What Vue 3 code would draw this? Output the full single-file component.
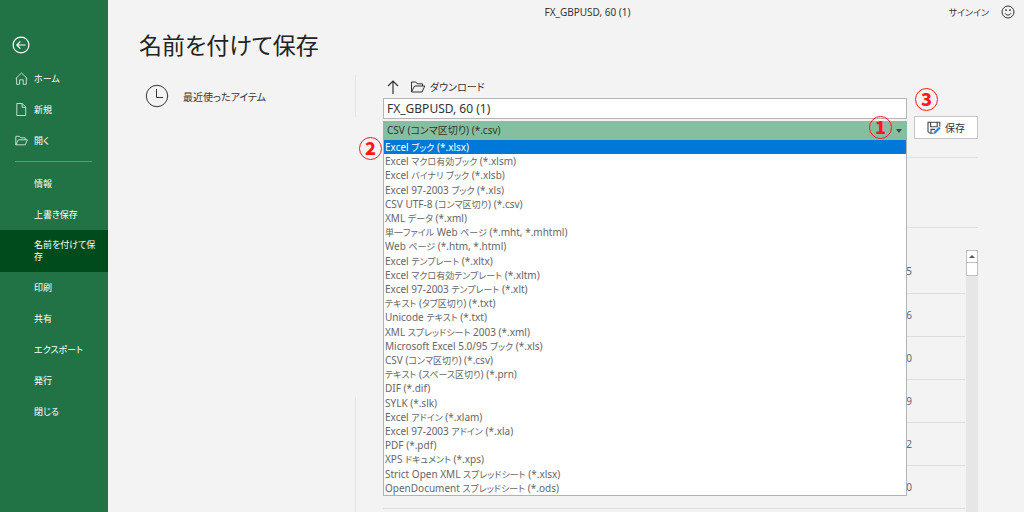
<script setup>
import { ref } from 'vue'

const primaryItems = [
  { label: 'ホーム', icon: 'home' },
  { label: '新規', icon: 'file' },
  { label: '開く', icon: 'folder' },
]
const secondaryItems = ['情報', '上書き保存', '名前を付けて保存', '印刷', '共有', 'エクスポート', '発行', '閉じる']
const activeItem = ref('名前を付けて保存')
const fileName = ref('FX_GBPUSD, 60 (1)')
const currentType = ref('CSV (コンマ区切り) (*.csv)')
const highlighted = ref(0)
const fileTypes = [
  'Excel ブック (*.xlsx)',
  'Excel マクロ有効ブック (*.xlsm)',
  'Excel バイナリ ブック (*.xlsb)',
  'Excel 97-2003 ブック (*.xls)',
  'CSV UTF-8 (コンマ区切り) (*.csv)',
  'XML データ (*.xml)',
  '単一ファイル Web ページ (*.mht, *.mhtml)',
  'Web ページ (*.htm, *.html)',
  'Excel テンプレート (*.xltx)',
  'Excel マクロ有効テンプレート (*.xltm)',
  'Excel 97-2003 テンプレート (*.xlt)',
  'テキスト (タブ区切り) (*.txt)',
  'Unicode テキスト (*.txt)',
  'XML スプレッドシート 2003 (*.xml)',
  'Microsoft Excel 5.0/95 ブック (*.xls)',
  'CSV (コンマ区切り) (*.csv)',
  'テキスト (スペース区切り) (*.prn)',
  'DIF (*.dif)',
  'SYLK (*.slk)',
  'Excel アドイン (*.xlam)',
  'Excel 97-2003 アドイン (*.xla)',
  'PDF (*.pdf)',
  'XPS ドキュメント (*.xps)',
  'Strict Open XML スプレッドシート (*.xlsx)',
  'OpenDocument スプレッドシート (*.ods)',
]
const rows = ['5', '6', '0', '9', '2', '0']

// Splits a label into Latin and Japanese runs so that each gets its own size.
const runs = (text) =>
  text.split(/([\u3000-\u9fff]+)/).filter(Boolean).map((t) => ({ text: t, ja: /[\u3000-\u9fff]/.test(t) }))
</script>

<template>
  <div class="backstage">
    <nav class="sidebar">
      <button class="back" aria-label="戻る">
        <svg width="18" height="18" viewBox="0 0 18 18" fill="none" stroke="currentColor" stroke-width="1.2">
          <circle cx="9" cy="9" r="7.9" />
          <path d="M13.6 9H5M8.4 5.4 4.8 9l3.6 3.6" />
        </svg>
      </button>
      <ul class="menu">
        <li v-for="item in primaryItems" :key="item.label">
          <button class="item with-icon">
            <svg v-if="item.icon === 'home'" width="13" height="13" viewBox="0 0 13 13" fill="none" stroke="currentColor">
              <path d="M.7 6.6 6.5 1l5.8 5.6M1.6 5.8v6.5h3V7.8h3.6v4.5h3.1V5.8" />
            </svg>
            <svg v-else-if="item.icon === 'file'" width="13" height="13" viewBox="0 0 13 13" fill="none" stroke="currentColor">
              <path d="M1.8.5h5.5l3.4 3.6v8.4H1.8zM7.1.7v3.6h3.5" />
            </svg>
            <svg v-else width="13" height="13" viewBox="0 0 13 13" fill="none" stroke="currentColor">
              <path d="M.8 10.8V2.3h3.7l1.2 1.5h4.5v1.9M.8 10.8l2.5-5h9.1l-2.2 5z" />
            </svg>
            <span>{{ item.label }}</span>
          </button>
        </li>
      </ul>
      <hr class="divider" />
      <ul class="menu">
        <li v-for="label in secondaryItems" :key="label">
          <button class="item" :class="{ active: label === activeItem }" @click="activeItem = label">{{ label }}</button>
        </li>
      </ul>
    </nav>

    <main class="main">
      <header class="topbar">
        <span class="doc-title">FX_GBPUSD, 60 (1)</span>
        <div class="account">
          <a class="signin" href="#">サインイン</a>
          <button class="smile" aria-label="フィードバック">
            <svg width="14" height="14" viewBox="0 0 14 14" fill="none" stroke="currentColor">
              <circle cx="7" cy="7" r="6" />
              <path d="M4 8.3c1 2.3 5 2.3 6 0" />
              <path d="M5 4.2v1.9M9 4.2v1.9" stroke-width="1.4" />
            </svg>
          </button>
        </div>
      </header>
      <h1>名前を付けて保存</h1>

      <div class="columns">
        <section class="places">
          <button class="recent">
            <svg width="24" height="24" viewBox="0 0 24 24" fill="none" stroke="currentColor">
              <circle cx="12" cy="12" r="10.7" />
              <path d="M11.5 5v8.5H18" />
            </svg>
            <span>最近使ったアイテム</span>
          </button>
          <div class="rule-gap"></div>
        </section>

        <section class="save-pane">
          <div class="path">
            <button class="up" aria-label="上へ">
              <svg width="14" height="16" viewBox="0 0 14 16" fill="none" stroke="currentColor" stroke-width="1.2">
                <path d="M7 15V2M2 7l5-5 5 5" />
              </svg>
            </button>
            <svg width="16" height="14" viewBox="0 0 16 14" fill="none" stroke="currentColor">
              <path d="M1.5 12V2h4.2l1.5 1.8h5.3V6M1.5 12l3-6h10.3L12 12z" />
            </svg>
            <a href="#">ダウンロード</a>
          </div>

          <div class="form">
            <div class="fields">
              <input v-model="fileName" class="name" type="text" aria-label="ファイル名" />
              <div class="combo">
                <select v-model="currentType" class="type" aria-label="ファイルの種類">
                  <option>CSV (コンマ区切り) (*.csv)</option>
                </select>
                <span class="caret"></span>
                <span class="badge badge-one">1</span>
                <ul class="options" role="listbox" aria-label="ファイルの種類の一覧">
                  <li
                    v-for="(type, i) in fileTypes"
                    :key="i"
                    role="option"
                    :aria-selected="i === highlighted"
                    :class="{ selected: i === highlighted }"
                    @mouseenter="highlighted = i"
                  ><div><span v-for="(run, n) in runs(type)" :key="n" :class="{ ja: run.ja }">{{ run.text }}</span></div></li>
                </ul>
                <span class="badge badge-two">2</span>
              </div>
            </div>
            <button class="save">
              <svg width="14" height="14" viewBox="0 0 14 14" fill="none" stroke="#444" stroke-width="1.1">
                <path d="M6 12.3H3L1 10.6V1.2h11.8v4.3M3.6 1.2v4.6h6.6V1.2M4 12.3V8.4h4" />
                <path d="m6 13.6.9-3 5.2-5.2 1.8 1.8-5.2 5.2z" fill="#2b88d8" stroke="#f3f3f3" stroke-width=".4" />
              </svg>
              <span>保存</span>
              <span class="badge badge-three">3</span>
            </button>
          </div>

          <div class="tools"></div>
          <div class="files">
            <table>
              <tbody>
                <tr v-for="(r, i) in rows" :key="i"><td>{{ r }}</td></tr>
              </tbody>
            </table>
            <div class="scrollbar">
              <button class="scroll-up" aria-label="上にスクロール"><span></span></button>
              <div class="thumb"></div>
            </div>
          </div>
        </section>
      </div>
    </main>
  </div>
</template>

<style>
body {
  margin: 0;
  background: #f3f3f3;
}
</style>

<style scoped>
* {
  box-sizing: border-box;
}
.backstage {
  display: flex;
  height: 100vh;
  overflow: hidden;
  background: #f3f3f3;
  color: #333;
  font-family: "Noto Sans", "Noto Sans CJK JP", sans-serif;
  font-size: 10px;
  font-feature-settings: "palt";
}
button,
input,
select {
  font: inherit;
  font-feature-settings: inherit;
  color: inherit;
  background: none;
  border: 0;
  padding: 0;
  margin: 0;
  border-radius: 0;
}
a {
  color: inherit;
  text-decoration: none;
}
ul {
  list-style: none;
  margin: 0;
  padding: 0;
}
svg {
  display: block;
  flex: none;
}
.sidebar {
  flex: none;
  width: 108px;
  padding-top: 36px;
  background: #217346;
  color: #fff;
  font-size: 9px;
}
.back {
  display: block;
  margin: 0 0 9px 12px;
}
.item {
  display: flex;
  align-items: center;
  width: 100%;
  min-height: 31px;
  padding: 9px 10px 9px 34px;
  line-height: 12px;
  text-align: left;
  word-break: break-all;
}
.with-icon {
  gap: 6px;
  padding-left: 15px;
}
.with-icon svg {
  color: #c4dccf;
}
.item.active {
  background: #004b1c;
}
.divider {
  height: 1px;
  margin: 5px 16px 6px 15px;
  border: 0;
  background: #5a9a76;
}
.main {
  flex: 1;
  min-width: 0;
  display: flex;
  flex-direction: column;
}
.topbar {
  display: grid;
  grid-template-columns: 1fr auto 1fr;
  align-items: center;
  height: 24px;
  padding: 0 9px 0 52px;
}
.doc-title {
  grid-column: 2;
}
.account {
  display: flex;
  align-items: center;
  justify-content: flex-end;
  gap: 12px;
  font-size: 9px;
}
h1 {
  margin: 0;
  padding: 5px 0 0 31px;
  font-size: 23px;
  line-height: 32px;
  font-weight: 400;
  color: #222;
}
.columns {
  flex: 1;
  min-height: 0;
  display: flex;
  padding: 14px 46px 0 31px;
}
.places {
  flex: none;
  width: 217px;
  border-right: 1px solid #e4e4e4;
}
.rule-gap {
  width: 217px;
  height: 280px;
  background: #f3f3f3;
}
.recent {
  display: flex;
  align-items: center;
  gap: 14px;
  height: 42px;
  padding-left: 6px;
  font-size: 10px;
}
.save-pane {
  flex: 1;
  min-width: 0;
  display: flex;
  flex-direction: column;
  padding-left: 27px;
}
.path {
  display: flex;
  align-items: center;
  height: 23px;
  padding-left: 3px;
}
.up {
  margin-right: 10px;
}
.path a {
  margin-left: 4px;
}
.form {
  display: flex;
  align-items: flex-end;
  gap: 7px;
}
.fields {
  flex: 1;
  min-width: 0;
}
.name {
  display: block;
  width: 100%;
  height: 21px;
  padding: 0 3px;
  background: #fff;
  border: 1px solid #b5b5b5;
  font-size: 12px;
}
.combo {
  position: relative;
  margin-top: 2px;
}
.type {
  display: block;
  appearance: none;
  width: 100%;
  height: 19px;
  padding: 0 4px 2px;
  background: #86bf9f;
}
.caret {
  position: absolute;
  top: 8px;
  right: 5px;
  border: 3px solid transparent;
  border-top: 4px solid #444;
  border-bottom: 0;
  pointer-events: none;
}
.options {
  position: absolute;
  z-index: 1;
  top: 100%;
  left: 0;
  right: 0;
  display: grid;
  grid-auto-rows: minmax(0, 1fr);
  height: 356px;
  background: #fff;
  border: 1px solid #b0b4ba;
  border-top: 0;
  color: #666;
}
.options li {
  display: flex;
  align-items: center;
  padding-left: 1px;
  line-height: 14px;
  white-space: pre;
}
.options .ja {
  font-size: 9px;
  line-height: 9px;
}
.options .selected {
  background: #0078d7;
  color: #fff;
}
.badge {
  position: absolute;
  z-index: 2;
  display: flex;
  align-items: center;
  justify-content: center;
  width: 23px;
  height: 23px;
  padding-bottom: 3px;
  border: 1px solid #ff1616;
  border-radius: 50%;
  color: #ff1616;
  font: 900 18px/20px "Noto Sans CJK JP", sans-serif;
}
.badge-one {
  top: -5px;
  right: 15px;
}
.badge-two {
  top: 16px;
  left: -24px;
}
.badge-three {
  top: -29px;
  left: 0;
}
.save {
  position: relative;
  display: flex;
  align-items: center;
  justify-content: center;
  gap: 4px;
  width: 64px;
  height: 23px;
  margin-bottom: 1px;
  background: #fff;
  border: 1px solid #c6c6c6;
  font-size: 10px;
}
.tools {
  height: 71px;
  margin-top: 17px;
  border: solid #e0e0e0;
  border-width: 1px 0;
}
.files {
  flex: 1;
  min-height: 0;
  display: flex;
  gap: 1px;
  padding-top: 22px;
}
table {
  flex: 1;
  align-self: flex-start;
  border-collapse: collapse;
}
td {
  height: 43px;
  padding: 0 53px 0 0;
  border-bottom: 1px solid #dcdcdc;
  text-align: right;
  color: #666;
}
.scrollbar {
  flex: none;
  width: 12px;
  background: #e6e6e6;
}
.scroll-up,
.thumb {
  display: flex;
  align-items: center;
  justify-content: center;
  width: 100%;
  height: 13px;
  background: #fff;
  border: 1px solid #c0c0c0;
}
.thumb {
  border-top: 0;
}
.scroll-up span {
  border: 3px solid transparent;
  border-bottom: 3px solid #555;
  border-top: 0;
}
</style>
